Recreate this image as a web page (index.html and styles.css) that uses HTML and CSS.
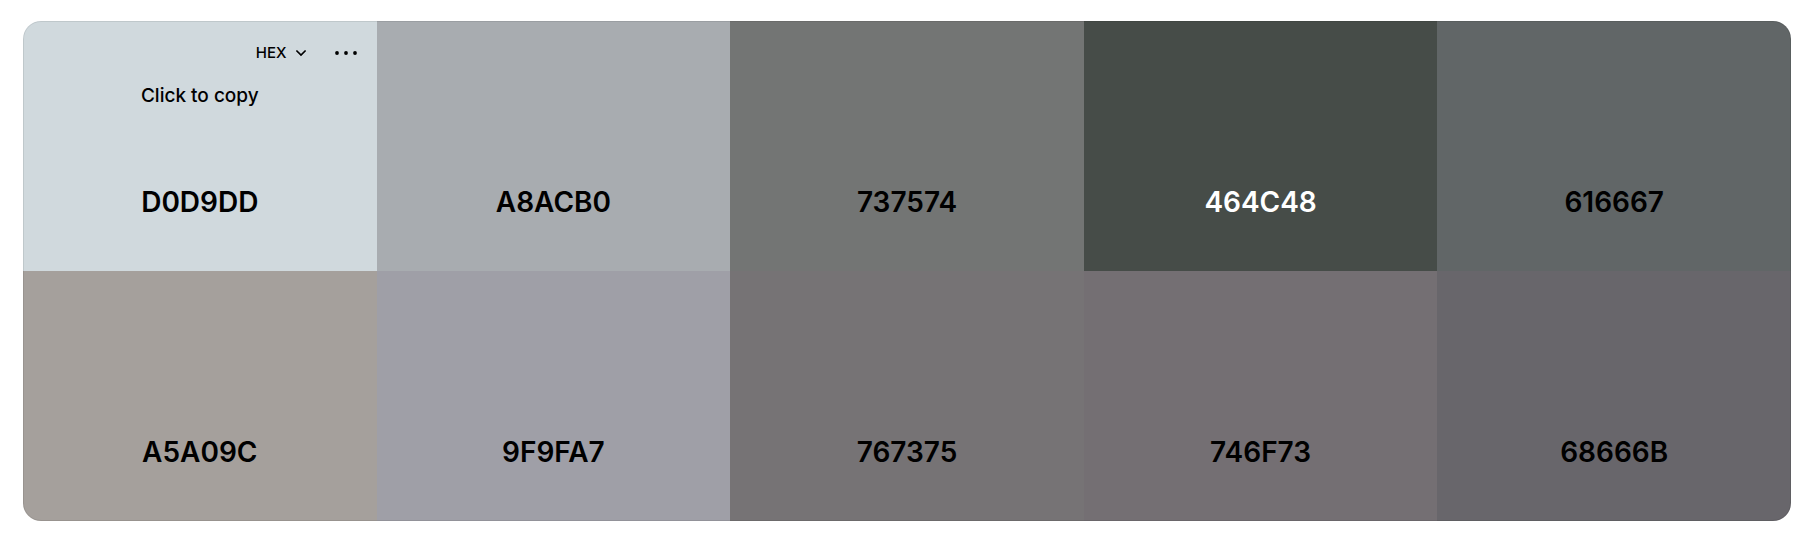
FILE: index.html
```html
<!DOCTYPE html>
<html lang="en">
<head>
<meta charset="utf-8">
<title>Color palette</title>
<link rel="stylesheet" href="styles.css">
</head>
<body>
<main class="palette">
  <section class="swatch swatch-mist">
    <div class="toolbar">
      <button class="format" type="button">HEX
        <svg class="chevron" viewBox="0 0 12 12" aria-hidden="true"><path d="M1.400 3.500L6 8l4.600-4.500"/></svg>
      </button>
      <button class="more" type="button" aria-label="More options">
        <svg class="dots" viewBox="0 0 22 6" aria-hidden="true"><circle cx="2" cy="3" r="1.900"/><circle cx="11" cy="3" r="1.900"/><circle cx="20" cy="3" r="1.900"/></svg>
      </button>
    </div>
    <span class="hint">Click to copy</span>
    <button class="code" type="button">D0D9DD</button>
  </section>
  <section class="swatch swatch-silver"><button class="code" type="button">A8ACB0</button></section>
  <section class="swatch swatch-stone"><button class="code" type="button">737574</button></section>
  <section class="swatch swatch-forest"><button class="code" type="button">464C48</button></section>
  <section class="swatch swatch-slate"><button class="code" type="button">616667</button></section>
  <section class="swatch swatch-sand"><button class="code" type="button">A5A09C</button></section>
  <section class="swatch swatch-lilac"><button class="code" type="button">9F9FA7</button></section>
  <section class="swatch swatch-taupe"><button class="code" type="button">767375</button></section>
  <section class="swatch swatch-mauve"><button class="code" type="button">746F73</button></section>
  <section class="swatch swatch-plum"><button class="code" type="button">68666B</button></section>
</main>
</body>
</html>
```
FILE: styles.css
```css
* { box-sizing: border-box; }
body { margin: 0; padding: 21px 24px 37px 23px; background: #fff; color: #000; font-family: Inter, "Liberation Sans", sans-serif; }
button { padding: 0; border: 0; background: none; color: inherit; font: inherit; cursor: pointer; }
.palette { display: grid; grid-template-columns: repeat(5, 1fr); grid-auto-rows: 250px; border-radius: 18px; overflow: hidden; position: relative; }
.palette::after { content: ""; position: absolute; inset: 0; border: 1px solid rgba(0, 0, 0, 0.08); border-radius: inherit; pointer-events: none; }
.swatch { display: flex; flex-direction: column; align-items: center; padding: 18px 20px 51px; }
.toolbar { display: flex; align-self: stretch; justify-content: flex-end; align-items: center; gap: 28px; height: 28px; }
.format { display: flex; align-items: center; gap: 8px; font-size: 15px; font-weight: 500; line-height: 20px; }
.chevron { width: 12px; height: 12px; fill: none; stroke: currentColor; stroke-width: 1.7; }
.more { display: flex; }
.dots { width: 22px; height: 6px; fill: currentColor; }
.hint { margin-top: 17px; font-size: 19px; font-weight: 500; line-height: 24px; }
.code { margin-top: auto; font-size: 28px; font-weight: 600; line-height: 36px; }
.swatch-mist { background: #d0d9dd; }
.swatch-silver { background: #a8acb0; }
.swatch-stone { background: #737574; }
.swatch-forest { background: #464c48; color: #fff; }
.swatch-slate { background: #616667; }
.swatch-sand { background: #a5a09c; }
.swatch-lilac { background: #9f9fa7; }
.swatch-taupe { background: #767375; }
.swatch-mauve { background: #746f73; }
.swatch-plum { background: #68666b; }
```
